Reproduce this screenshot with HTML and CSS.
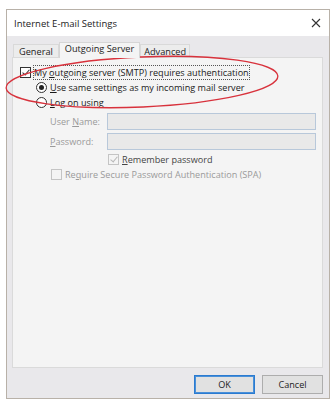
FILE: index.html
```html
<!DOCTYPE html>
<html lang="en">
<head>
    <meta charset="UTF-8">
    <title>Internet E-mail Settings</title>
    <link rel="stylesheet" href="styles.css">
</head>
<body>
    <div class="dialog">
        <!-- Title bar -->
        <div class="title-bar">
            <span class="title">Internet E-mail Settings</span>
            <svg class="close" width="10" height="10" viewBox="0 0 10 10">
                <path d="M1 1 L9 9 M9 1 L1 9" stroke="#333" stroke-width="1.1" fill="none"/>
            </svg>
        </div>

        <div class="dialog-body">
            <div class="tabs">
                <div class="tab">General</div>
                <div class="tab active">Outgoing Server</div>
                <div class="tab last">Advanced</div>
            </div>

            <div class="panel">
                <div class="row">
                    <span class="check checked"></span>
                    <span class="label focus">My <u>o</u>utgoing server (SMTP) requires authentication</span>
                </div>
                <div class="row indent">
                    <span class="radio checked"></span>
                    <span class="label"><u>U</u>se same settings as my incoming mail server</span>
                </div>
                <div class="row indent">
                    <span class="radio"></span>
                    <span class="label"><u>L</u>og on using</span>
                </div>
                <div class="field">
                    <span class="field-label">User <u>N</u>ame:</span>
                    <span class="input"></span>
                </div>
                <div class="field">
                    <span class="field-label"><u>P</u>assword:</span>
                    <span class="input"></span>
                </div>
                <div class="row remember">
                    <span class="check checked disabled"></span>
                    <span class="label"><u>R</u>emember password</span>
                </div>
                <div class="row spa">
                    <span class="check disabled"></span>
                    <span class="label">Re<u>q</u>uire Secure Password Authentication (SPA)</span>
                </div>
            </div>

            <div class="buttons">
                <div class="btn default">OK</div>
                <div class="btn">Cancel</div>
            </div>
        </div>

        <!-- red annotation ring -->
        <svg class="ring" width="335" height="130" viewBox="0 0 335 130">
            <ellipse cx="142" cy="82" rx="136" ry="25" transform="rotate(-2.5 142 82)"
                     fill="none" stroke="#d8323c" stroke-width="1.3"/>
        </svg>
    </div>
</body>
</html>
```

FILE: styles.css
```css
body {
    margin: 0;
    background: #fff;
    font-family: "Open Sans", "Noto Sans", sans-serif;
    font-size: 9.1px;
    color: #1a1a1a;
}
.dialog {
    margin: 9px 0 0 6px;
    width: 324px;
    height: 390px;
    box-sizing: border-box;
    border: 1px solid #b8b1a8;
    background: #e9e8eb;
    display: flex;
    flex-direction: column;
}
.title-bar {
    height: 26px;
    background: #fff;
    display: flex;
    align-items: center;
    justify-content: space-between;
    padding: 0 8px 0 7px;
}
.title {
    font-size: 9.5px;
    color: #222;
}
.dialog-body {
    flex: 1;
    display: flex;
    flex-direction: column;
    padding: 6px 6px 0 5px;
}
.tabs {
    display: flex;
    align-items: flex-end;
    height: 15px;
    padding-left: 1px;
}
.tab {
    height: 12px;
    line-height: 13px;
    padding: 0 5px;
    border: 1px solid #d9d9d9;
    border-bottom: none;
    background: #ececec;
    color: #222;
    font-size: 9.2px;
}
.tab.last {
    padding: 0 3px;
}
.tab.active {
    height: 15px;
    line-height: 12px;
    background: #f4f4f4;
    border-color: #d6d6d6;
    margin-bottom: -1px;
    position: relative;
    z-index: 1;
}
.panel {
    height: 311px;
    box-sizing: border-box;
    background: #f4f4f4;
    border: 1px solid #dadada;
    padding: 7px 0 0 7px;
    display: flex;
    flex-direction: column;
}
.row {
    display: flex;
    align-items: center;
    height: 15px;
    gap: 3px;
}
.row.indent {
    padding-left: 16px;
}
.check {
    width: 11px;
    height: 11px;
    box-sizing: border-box;
    border: 1px solid #333;
    background: #fff;
    position: relative;
}
.check.checked::after {
    content: "";
    position: absolute;
    left: 3px;
    top: 0px;
    width: 3px;
    height: 6px;
    border: solid #333;
    border-width: 0 1px 1px 0;
    transform: rotate(40deg);
}
.check.disabled {
    border-color: #c4c4c4;
    background: #f4f4f4;
}
.check.disabled::after {
    border-color: #b8b8b8;
}
.radio {
    width: 11px;
    height: 11px;
    box-sizing: border-box;
    border: 1px solid #333;
    border-radius: 50%;
    background: #fff;
    position: relative;
}
.radio.checked::after {
    content: "";
    position: absolute;
    left: 2px;
    top: 2px;
    width: 5px;
    height: 5px;
    border-radius: 50%;
    background: #222;
}
.label.focus {
    outline: 1px dotted #555;
    outline-offset: 0;
}
.field {
    display: flex;
    align-items: center;
    margin-top: 3px;
    height: 17px;
    padding-left: 30px;
    margin-right: 6px;
}
.field-label {
    width: 57px;
    color: #9a9a9a;
}
.input {
    flex: 1;
    height: 17px;
    box-sizing: border-box;
    border: 1px solid #b8c8da;
    background: #e9e9e9;
}
.remember {
    margin-top: 2px;
    padding-left: 88px;
}
.remember .label {
    color: #444;
}
.spa {
    padding-left: 31px;
}
.spa .label {
    color: #9a9a9a;
}
.buttons {
    display: flex;
    justify-content: flex-end;
    gap: 7px;
    padding: 7px 0 0;
}
.btn {
    width: 61px;
    height: 19px;
    box-sizing: border-box;
    border: 1px solid #adadad;
    background: #e1e1e1;
    text-align: center;
    line-height: 17px;
    color: #222;
}
.btn.default {
    border: 1px solid #2b7bd0;
    box-shadow: inset 0 0 0 1px #4a90d9;
}
.ring {
    position: absolute;
    left: 0;
    top: 0;
    pointer-events: none;
}
```
